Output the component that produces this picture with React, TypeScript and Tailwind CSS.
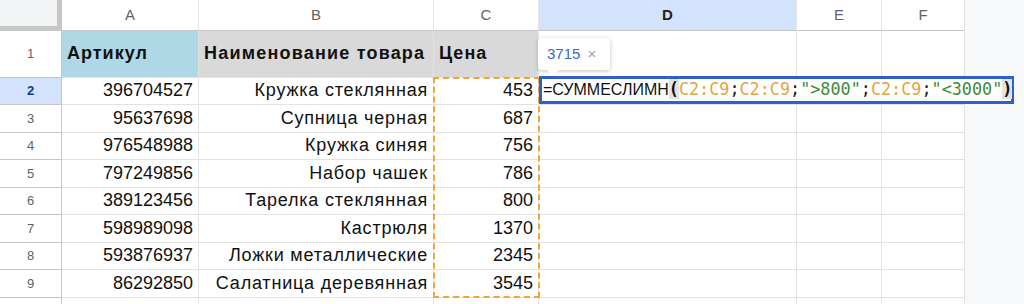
import React, { FC } from "react";

const rows = [
  { id: "396704527", name: "Кружка стеклянная", price: "453" },
  { id: "95637698", name: "Супница черная", price: "687" },
  { id: "976548988", name: "Кружка синяя", price: "756" },
  { id: "797249856", name: "Набор чашек", price: "786" },
  { id: "389123456", name: "Тарелка стеклянная", price: "800" },
  { id: "598989098", name: "Кастрюля", price: "1370" },
  { id: "593876937", name: "Ложки металлические", price: "2345" },
  { id: "86292850", name: "Салатница деревянная", price: "3545" },
];

const cols = ["A", "B", "C", "D", "E", "F"];
const widths = ["w-[137px]", "w-[235px]", "w-[105px]", "w-[258px]", "w-[85px]", "w-[83px]"];

interface CellProps {
  w: string;
  className?: string;
  children?: React.ReactNode;
}

const Cell: FC<CellProps> = ({ w, className, children }) => (
  <div className={`${w} shrink-0 h-full border-r border-b border-[#e2e3e3] flex items-center whitespace-nowrap ${className ?? ""}`}>
    {children}
  </div>
);

const Range = ({ t }: { t: string }) => <span className="text-[#e8a43c]">{t}</span>;
const Str = ({ t }: { t: string }) => <span className="text-[#3f8a33]">{t}</span>;
const Paren = ({ t }: { t: string }) => <span className="bg-[#e3e3e3] font-bold text-[#111]">{t}</span>;

const App: FC = () => {
  return (
    <div className="relative w-[1024px] h-[304px] overflow-hidden bg-[#f8f9fa] font-['Liberation_Sans',Arial,sans-serif] text-[#111]">
      {/* column headers */}
      <div className="flex h-[31px]">
        <div className="w-[62px] shrink-0 h-full bg-[#f1f3f4] border-r-[5px] border-b-[5px] border-[#c4c7c5]" />
        {cols.map((c, i) => (
          <Cell
            key={c}
            w={widths[i]}
            className={`justify-center border-b-[#c4c7c5] text-[15px] ${c === "D" ? "bg-[#d3e3fd] font-bold text-[#1f1f1f]" : "bg-white text-[#5f6368]"}`}
          >
            {c}
          </Cell>
        ))}
      </div>

      {/* row 1 */}
      <div className="flex h-[46.5px]">
        <div className="w-[62px] shrink-0 h-full bg-white border-r border-b border-[#c4c7c5] flex items-center justify-center text-[13px] text-[#5f6368]">
          1
        </div>
        <Cell w={widths[0]} className="bg-[#aed8e6] px-[5px] text-[18px] font-bold tracking-[1px]">Артикул</Cell>
        <Cell w={widths[1]} className="bg-[#d9d9d9] px-[5px] text-[18px] font-bold tracking-[1.2px]">Наименование товара</Cell>
        <Cell w={widths[2]} className="bg-[#d9d9d9] px-[5px] text-[18px] font-bold tracking-[1px]">Цена</Cell>
        <Cell w={widths[3]} className="bg-white" />
        <Cell w={widths[4]} className="bg-white" />
        <Cell w={widths[5]} className="bg-white" />
      </div>

      {/* data rows */}
      {rows.map((r, i) => (
        <div key={r.id} className="flex h-[27.5px]">
          <div
            className={`w-[62px] shrink-0 h-full border-r border-b border-[#c4c7c5] flex items-center justify-center text-[13px] ${i === 0 ? "bg-[#d3e3fd] font-bold text-[#0b3b8c]" : "bg-white text-[#5f6368]"}`}
          >
            {i + 2}
          </div>
          <Cell w={widths[0]} className="bg-white justify-end px-[5px] text-[18px]">{r.id}</Cell>
          <Cell w={widths[1]} className="bg-white justify-end pl-[5px] pr-[5px] text-[18px] tracking-[0.8px]">{r.name}</Cell>
          <Cell w={widths[2]} className="bg-white justify-end px-[5px] text-[18px]">{r.price}</Cell>
          <Cell w={widths[3]} className="bg-white" />
          <Cell w={widths[4]} className="bg-white" />
          <Cell w={widths[5]} className="bg-white" />
        </div>
      ))}

      {/* trailing row */}
      <div className="flex h-[27.5px]">
        <div className="w-[62px] shrink-0 h-full bg-white border-r border-[#c4c7c5]" />
        {widths.map((w) => (
          <Cell key={w} w={w} className="bg-white" />
        ))}
      </div>

      {/* copied range C2:C9 */}
      <div className="absolute left-[433px] top-[77px] w-[107px] h-[221px] border-2 border-dashed border-[#f0a43a] pointer-events-none" />

      {/* cell editor */}
      <div className="absolute left-[539px] top-[76px] w-[475px] h-[28px] bg-white border-[3px] border-[#2f5fc8] flex items-center pl-[1px] whitespace-nowrap">
        <span className="text-[16px]">=СУММЕСЛИМН</span>
        <span className="font-['DejaVu_Sans_Mono',monospace] text-[16.8px] text-[#222]">
          <Paren t="(" />
          <Range t="C2:C9" />;<Range t="C2:C9" />;<Str t={'">800"'} />;<Range t="C2:C9" />;<Str t={'"<3000"'} />
          <Paren t=")" />
        </span>
      </div>

      {/* result preview tooltip */}
      <div className="absolute left-[538px] top-[38px] w-[72px] h-[32px] bg-white rounded-[3px] shadow-[0_1px_4px_rgba(0,0,0,0.25)] flex items-center pl-[9px] gap-[7px]">
        <span className="text-[15px] text-[#3b67c4]">3715</span>
        <span className="text-[15px] text-[#a0a0a0]">×</span>
        <div className="absolute left-[9px] -bottom-[6px] w-0 h-0 border-l-[6px] border-r-[6px] border-t-[6px] border-l-transparent border-r-transparent border-t-white" />
      </div>
    </div>
  );
};

export default App;
